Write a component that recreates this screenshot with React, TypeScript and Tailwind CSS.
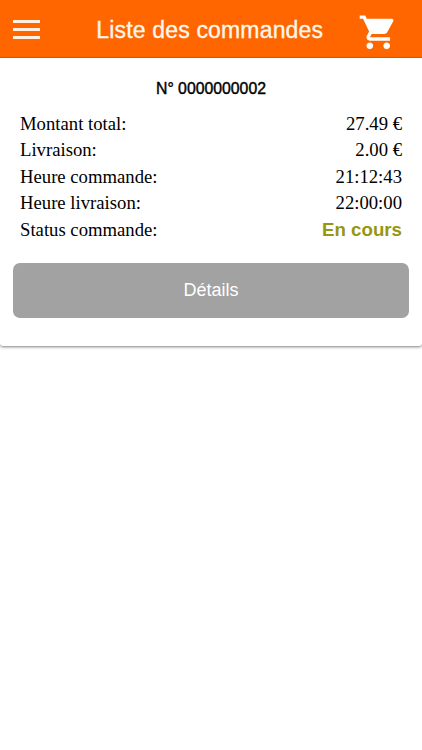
const rows = [
  { label: 'Montant total:', value: '27.49 €' },
  { label: 'Livraison:', value: '2.00 €' },
  { label: 'Heure commande:', value: '21:12:43' },
  { label: 'Heure livraison:', value: '22:00:00' },
];

function CartIcon() {
  return (
    <svg className="w-[40.5px] h-[40.5px]" viewBox="0 0 24 24" fill="currentColor">
      <path d="M7 18c-1.1 0-1.99.9-1.99 2S5.9 22 7 22s2-.9 2-2-.9-2-2-2zM1 2v2h2l3.6 7.59-1.35 2.45c-.16.28-.25.61-.25.96 0 1.1.9 2 2 2h12v-2H7.42c-.14 0-.25-.11-.25-.25l.03-.12.9-1.63h7.45c.75 0 1.41-.41 1.75-1.03l3.58-6.49A1.003 1.003 0 0 0 20 4H5.21l-.94-2H1zm16 16c-1.1 0-1.99.9-1.99 2s.89 2 1.99 2 2-.9 2-2-.9-2-2-2z" />
    </svg>
  );
}

function Header() {
  return (
    <header className="h-[58px] bg-[#ff6600] border-b border-[#e65f08] text-[#fff6ea] flex items-center justify-between pl-[13px] pr-[23px]">
      <button className="w-[27px] flex flex-col gap-[5px] mt-[1px]" aria-label="Menu">
        <span className="h-[3px] w-full bg-[#fff0df]" />
        <span className="h-[3px] w-full bg-[#fff0df]" />
        <span className="h-[3px] w-full bg-[#fff0df]" />
      </button>
      <h1 className="ml-[21px] pt-[2px] text-[23px] leading-7 tracking-[0.17px] whitespace-nowrap [-webkit-text-stroke:0.35px_currentColor]">
        Liste des commandes
      </h1>
      <button className="mt-[7px] text-white" aria-label="Panier">
        <CartIcon />
      </button>
    </header>
  );
}

export default function App() {
  return (
    <div className="min-h-screen bg-white text-black font-['Liberation_Sans',Arial,sans-serif]">
      <Header />
      <main className="h-[288px] px-[13px] pt-[21px] rounded-b-[3px] bg-white shadow-[0_1px_3px_rgba(0,0,0,0.5)]">
        <h2 className="text-center text-[15.8px] leading-5 [-webkit-text-stroke:0.4px_currentColor]">
          N° 0000000002
        </h2>
        <dl className="mt-[12px] px-[7px] font-['Liberation_Serif','Times_New_Roman',serif] text-[18.7px] leading-[26.4px]">
          {rows.map((row) => (
            <div key={row.label} className="flex justify-between">
              <dt>{row.label}</dt>
              <dd>{row.value}</dd>
            </div>
          ))}
          <div className="flex justify-between">
            <dt>Status commande:</dt>
            <dd className="font-['Liberation_Sans',Arial,sans-serif] font-bold text-[#969611]">En cours</dd>
          </div>
        </dl>
        <button className="mt-[20px] w-full h-[55px] rounded-[7px] bg-[#a2a2a2] text-white text-[18px]">
          Détails
        </button>
      </main>
    </div>
  );
}
